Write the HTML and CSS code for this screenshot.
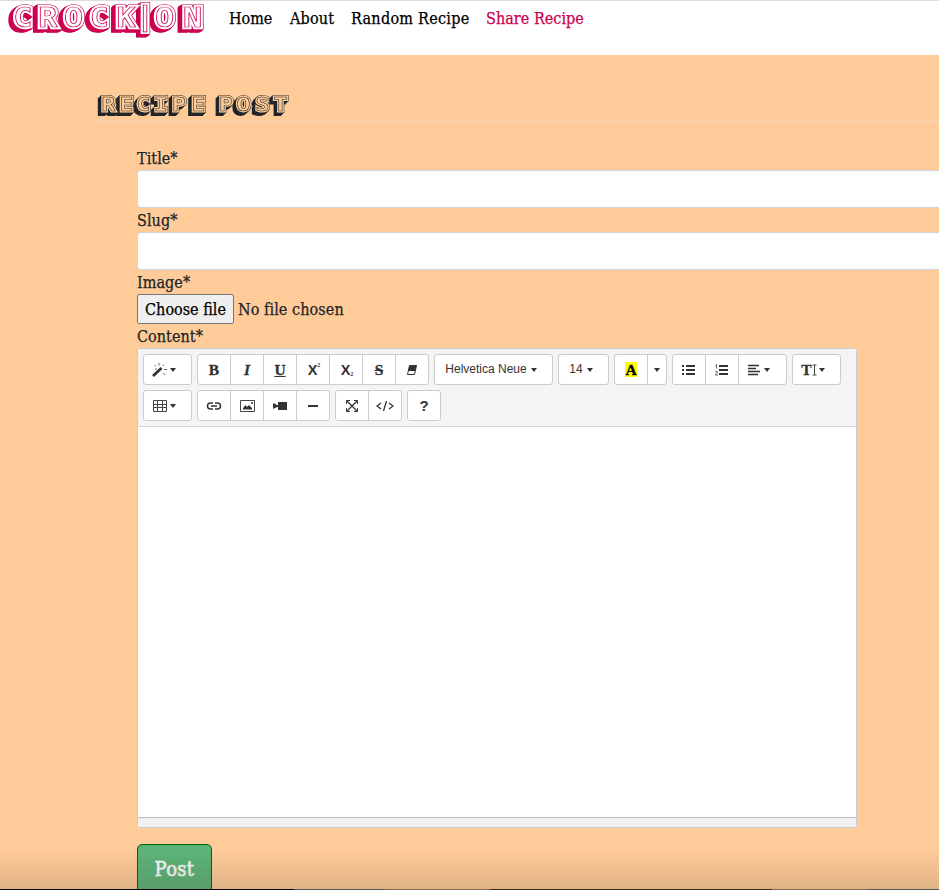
FILE: index.html
```html
<!DOCTYPE html>
<html lang="en">
<head>
<meta charset="utf-8">
<title>Crockion - Share Recipe</title>
<link rel="stylesheet" href="styles.css">
</head>
<body>
<header class="navbar">
  <a class="brand"><svg class="shade" width="208" height="44"><defs><text id="logo" y="27.500 27.500 27.500 27.500 27.500 24.500 27.500 27.500" x="19.300 40.500 62.300 84.100 106.800 122.900 139.400 163.300">CROCK|ON</text></defs><g transform="scale(1.18 1)"><use class="edge" href="#logo"/><use class="face" href="#logo"/><use class="inline" href="#logo"/></g></svg></a>
  <nav class="links"><a class="w-home">Home</a><a class="w-about">About</a><a class="w-random">Random Recipe</a><a class="w-share active">Share Recipe</a></nav>
</header>
<main>
  <h1><svg class="shade dark" width="200" height="30"><defs><text id="heading" y="17.500" x="10 25.700 40.400 55.700 71.300 88.200 100 112.200 127.400 143.800 159.500">RECIPE POST</text></defs><g transform="scale(1.15 1)"><use class="edge" href="#heading"/><use class="face" href="#heading"/><use class="inline" href="#heading"/></g></svg></h1>
  <form>
    <label>Title*</label>
    <div class="input"></div>
    <label>Slug*</label>
    <div class="input"></div>
    <label>Image*</label>
    <div class="file"><span class="choose">Choose file</span><span class="nofile">No file chosen</span></div>
    <label class="content-label">Content*</label>
    <div class="editor">
      <div class="toolbar">
        <div class="row">
          <div class="group"><span class="btn w49"><svg width="16" height="14" viewBox="0 0 16 14"><path d="M1 13 9.500 5" stroke="#333" stroke-width="2.800"/><path d="M7 0v2.500M2.500 2l1.500 1.500M12 1.500l-1.500 1.500M12 6.500h3M11.500 10l1.500 2M3 6h2" stroke="#666"/></svg><i class="caret"></i></span></div>
          <div class="group">
            <span class="btn serif b">B</span><span class="btn serif i">I</span><span class="btn serif u">U</span>
            <span class="btn x">X<sup>2</sup></span><span class="btn x">X<sub>2</sub></span><span class="btn serif s">S</span>
            <span class="btn"><svg width="12" height="12" viewBox="0 0 12 12"><path d="M3.500 1.500h7l-2 9h-7z" fill="#fff" stroke="#333"/><path d="M3.500 1.500h7l-1.200 5.500h-7z" fill="#333"/></svg></span>
          </div>
          <div class="group"><span class="btn sans w119">Helvetica Neue<i class="caret"></i></span></div>
          <div class="group"><span class="btn sans w51">14<i class="caret"></i></span></div>
          <div class="group"><span class="btn serif"><span class="hl">A</span></span><span class="btn w20"><i class="caret"></i></span></div>
          <div class="group">
            <span class="btn"><svg width="14" height="12" viewBox="0 0 14 12"><path d="M0 2h2M0 6h2M0 10h2M4 2h9M4 6h9M4 10h9" stroke="#333" stroke-width="2"/></svg></span>
            <span class="btn"><svg width="14" height="12" viewBox="0 0 14 12"><path d="M4 2h9M4 6h9M4 10h9" stroke="#333" stroke-width="2"/><path d="M.5 1.500 1.500.5v4M.3 7.500h2v1.500l-2 2h2.500" fill="none" stroke="#555" stroke-width=".9"/></svg></span>
            <span class="btn w49 align"><svg width="14" height="12" viewBox="0 0 14 12"><path d="M0 1.500h11M0 4.500h8M0 7.500h12M0 10.500h10" stroke="#333" stroke-width="1.300"/></svg><i class="caret"></i></span>
          </div>
          <div class="group"><span class="btn serif w49 height">T<svg width="5" height="12" viewBox="0 0 5 12"><path d="M.5 1h4M.5 11h4M2.500 1v10" stroke="#444" stroke-width="1"/></svg><i class="caret"></i></span></div>
        </div>
        <div class="row">
          <div class="group"><span class="btn w49"><svg width="15" height="12" viewBox="0 0 15 12"><path d="M.5.500h13v11H.5zM.5 4.500h13M.5 7.500h13M4.500.5v11M9.500.5v11" fill="none" stroke="#444"/></svg><i class="caret"></i></span></div>
          <div class="group">
            <span class="btn"><svg width="16" height="12" viewBox="0 0 16 12"><path d="M7 9H4.500a3 3 0 0 1 0-6H7M9 3h2.500a3 3 0 0 1 0 6H9M5 6h6" fill="none" stroke="#333" stroke-width="1.500"/></svg></span>
            <span class="btn"><svg width="15" height="12" viewBox="0 0 15 12"><path d="M.5.500h14v11H.5z" fill="none" stroke="#444"/><path d="M3 9.500V8l2.500-3L7 7l2-2 3 3v1.500z" fill="#333"/><circle cx="12" cy="3" r="1" fill="#333"/></svg></span>
            <span class="btn"><svg width="14" height="10" viewBox="0 0 14 10"><path d="M5 1h9v8H5zM0 2.500h1.500L4 4h1v2H4L1.500 7.500H0z" fill="#333"/></svg></span>
            <span class="btn"><svg width="10" height="4"><path d="M0 2h10" stroke="#333" stroke-width="2"/></svg></span>
          </div>
          <div class="group">
            <span class="btn"><svg width="12" height="12" viewBox="0 0 12 12"><path d="M1 1l10 10M11 1 1 11" stroke="#333" stroke-width="1.300"/><path d="M.5 4V.5H4M8 .5h3.500V4M11.500 8v3.500H8M4 11.500H.5V8" fill="none" stroke="#333"/></svg></span>
            <span class="btn"><svg width="18" height="10" viewBox="0 0 18 10"><path d="M5 2 1 5l4 3M13 2l4 3-4 3M10.500 0l-3 10" fill="none" stroke="#333" stroke-width="1.300"/></svg></span>
          </div>
          <div class="group"><span class="btn question">?</span></div>
        </div>
      </div>
      <div class="canvas"></div>
      <div class="statusbar"></div>
    </div>
    <button type="button" class="post">Post</button>
  </form>
</main>
<div class="bottom-fade"></div>
</body>
</html>
```
FILE: styles.css
```css
* { box-sizing: border-box; }
html, body { height: 100%; overflow: hidden; }
body { margin: 0; background: #fc9; color: #212529; font: 16px/24px "Roboto Slab", "DejaVu Serif Condensed", "DejaVu Serif", serif; -webkit-text-stroke: .25px; }
.navbar { height: 55px; background: #fff; border-top: 1px solid #dcdcdc; display: flex; }
.brand { width: 229px; height: 44px; margin-top: -1px; }
svg { display: block; flex: none; }

/* Shaded display lettering: outer edge, face, inline contour, then the extrusion */
.shade { --ink: #cc0052; --face: #fff; font: bold 27px "DejaVu Sans Mono", monospace; text-anchor: middle; -webkit-text-stroke: 0; filter: drop-shadow(-1px 1px 0 var(--ink)) drop-shadow(-1px 1px 0 var(--ink)) drop-shadow(-2px 1px 0 var(--ink)); }
.edge { fill: var(--ink); stroke: var(--ink); stroke-width: 5.600px; }
.face { fill: var(--face); stroke: var(--face); stroke-width: 4.400px; }
.inline { fill: var(--face); stroke: var(--ink); stroke-width: .7px; }
.dark { --ink: #212529; --face: #fc9; font-size: 20px; filter: drop-shadow(-1px 1px 0 var(--ink)) drop-shadow(-2px 2px 0 var(--ink)); }
.dark .edge { stroke-width: 3.800px; }
.dark .face { stroke-width: 2.900px; }
.dark .inline { stroke-width: .5px; }

.links { display: flex; gap: 16px; padding-top: 6px; color: #000; white-space: nowrap; }
.w-home { width: 45px; }
.w-about { width: 45px; letter-spacing: .2px; }
.w-random { width: 119px; letter-spacing: .28px; }
.w-share { letter-spacing: .04px; }
.active { color: #cc0052; }
main { overflow: hidden; }
h1 { margin: 38px 0 0 97px; height: 29px; border-bottom: 1px solid #ead8c8; }
form { margin: 24px 0 0 137px; }
label { display: block; height: 24px; padding-top: 1px; letter-spacing: .05px; }
.input { width: 900px; height: 38px; background: #fff; border: 1px solid #ced4da; border-radius: 4px; }
.file { height: 30px; display: flex; align-items: center; white-space: nowrap; }
.choose { width: 97px; height: 30px; border: 1px solid #767676; border-radius: 2px; background: #efefef; color: #000; text-align: center; line-height: 30px; margin-right: 4px; }
.nofile { line-height: 26px; padding-top: 2px; letter-spacing: .08px; }
.editor { width: 720px; height: 480px; border: 1px solid #c8cccf; border-radius: 3px; background: #fff; display: flex; flex-direction: column; -webkit-text-stroke: 0; }
.toolbar { height: 78px; background: #f4f4f4; border-bottom: 1px solid #d5d5d5; padding: 5px; display: flex; flex-direction: column; gap: 5px; }
.row, .group { display: flex; }
.row { gap: 5px; }
.group { height: 31px; border: 1px solid #ccc; border-radius: 3px; background: #fff; overflow: hidden; }
.btn { width: 33px; display: flex; align-items: center; justify-content: center; color: #333; white-space: nowrap; }
.btn:first-child { width: 32px; }
.btn + .btn { border-left: 1px solid #ccc; }
.btn.w49, .btn.w49:first-child { width: 47px; padding-right: 7px; }
.btn.w49.align { width: 48px; }
.btn.w119 { width: 117px; padding-right: 5px; }
.btn.w51 { width: 49px; padding-right: 5px; }
.btn.w20 { width: 19px; }
.caret { border: 3px solid transparent; border-top: 4.5px solid #333; border-bottom: 0; margin-left: 2px; }
.sans .caret { margin: 2px 0 0 4px; }
.w20 .caret { margin: 0; }
.serif { font: bold 15.5px "Liberation Serif", serif; -webkit-text-stroke: .3px; }
.i { font-style: italic; }
.u { text-decoration: underline; }
.s { text-decoration: line-through; }
.sans { font: 12px "Liberation Sans", sans-serif; padding-bottom: 2px; }
.x { font: bold 14.5px "Liberation Sans", sans-serif; padding-left: 2px; }
.x sup, .x sub { font: bold 6px "Liberation Serif", serif; }
.x sup { margin-top: -9px; }
.x sub { margin-top: 9px; }
.hl { background: #ff0; color: #000; width: 12px; height: 15px; line-height: 16px; text-align: center; }
.height .caret { margin-left: 2px; }
.question { font: bold 15px "Liberation Sans", sans-serif; }
.canvas { flex: 1; }
.statusbar { height: 10px; background: #f0f0f0; border-top: 1px solid #bbb; }
.post { display: block; margin-top: 16px; width: 75px; height: 50px; border: 1px solid #006400; border-radius: 5px; background: #5bb378; color: #f8f9fa; font: 20px "Roboto Slab", "DejaVu Serif Condensed", serif; letter-spacing: .3px; padding: 0; -webkit-text-stroke: .6px; }
.bottom-fade { position: absolute; left: 0; right: 0; bottom: 0; height: 40px; background: linear-gradient(90deg, #0c0618 294px, #555 294px 385px, #8a6a4c 385px 490px, #3d2a20 490px 772px, #8a6a4c 772px 868px, #555 868px) bottom / 100% 1px no-repeat, radial-gradient(circle at 100% 0, transparent 6px, #0c0618 7px) 0 100% / 6px 4px no-repeat, linear-gradient(transparent, rgba(80, 60, 45, .19)); }
```
